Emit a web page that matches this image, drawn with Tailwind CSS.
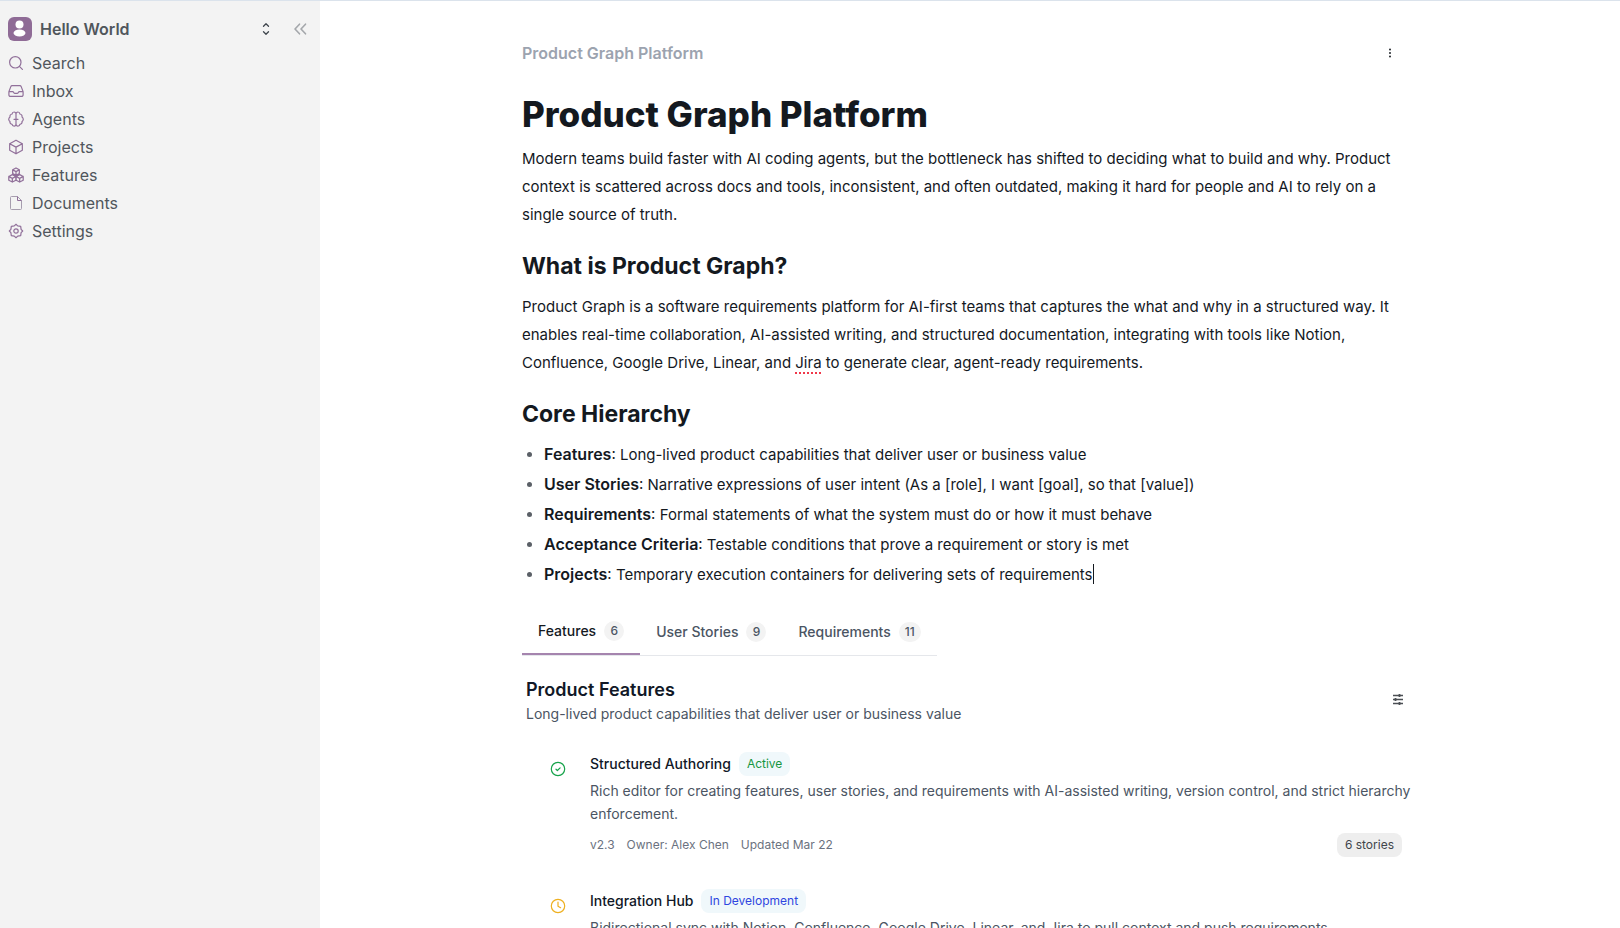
<!DOCTYPE html>
<html lang="en">
<head>
<meta charset="utf-8">
<title>Product Graph Platform</title>
<script src="https://cdn.jsdelivr.net/npm/@tailwindcss/browser@4"></script>
</head>
<body class="flex h-screen overflow-hidden border-t border-[#dbe3ec] bg-white font-['Inter',sans-serif] text-[#14191f]">

<aside class="w-80 shrink-0 bg-[#f3f3f3] px-2 pt-3 text-[#50565c]">
  <div class="flex h-8 items-center">
    <button class="flex grow items-center gap-2 text-left font-semibold">
      <svg class="size-6" viewBox="0 0 24 24"><rect width="24" height="24" rx="6" fill="#8f6b96"/><circle cx="11.5" cy="7.500" r="4" fill="#fff"/><ellipse cx="11.500" cy="16" rx="6" ry="3.500" fill="#fff"/></svg>
      <span class="grow">Hello World</span>
      <svg class="size-4" viewBox="0 0 16 16" fill="none" stroke="#3f464d" stroke-width="1.300" stroke-linecap="round" stroke-linejoin="round"><path d="M5.500 5.300 8 2.800l2.500 2.500M5.500 10.700 8 13.200l2.500-2.500"/></svg>
    </button>
    <button class="ml-4 mr-0.5" aria-label="Collapse sidebar">
      <svg class="w-5 h-4" viewBox="0 0 20 16" fill="none" stroke="#a4a7ab" stroke-width="1.600" stroke-linecap="round" stroke-linejoin="round"><path d="M9.500 3.200 5 8l4.500 4.800M15.500 3.200 11 8l4.500 4.800"/></svg>
    </button>
  </div>
  <nav class="mt-1 flex flex-col">
    <a href="#" class="flex h-7 items-center gap-2"><svg class="size-4" viewBox="0 0 16 16" fill="none" stroke="#91709a" stroke-width="1.200" stroke-linecap="round"><circle cx="7.300" cy="7.300" r="5.700"/><path d="m11.400 11.400 3 3"/></svg>Search</a>
    <a href="#" class="flex h-7 items-center gap-2"><svg class="size-4" viewBox="0 0 16 16" fill="none" stroke="#91709a" stroke-width="1.200" stroke-linecap="round" stroke-linejoin="round"><path d="M4.200 2.600h7.600a1.500 1.500 0 0 1 1.400 1l1.900 5v3.300a1.500 1.500 0 0 1-1.500 1.500H2.400a1.500 1.500 0 0 1-1.500-1.500V8.600l1.900-5a1.500 1.500 0 0 1 1.400-1ZM.9 8.600h3.700c.6 0 .8.300 1.100.9.300.6.700.9 1.300.9h2c.6 0 1-.3 1.300-.9.300-.6.500-.9 1.100-.9h3.700"/></svg>Inbox</a>
    <a href="#" class="flex h-7 items-center gap-2"><svg class="size-4" viewBox="0 0 16 16" fill="none" stroke="#91709a" stroke-width="1.200" stroke-linecap="round" stroke-linejoin="round"><path d="M8 3.200C8 1.800 7.200 1 6.100 1S4.200 1.800 4.100 3C2.500 3.200 1.700 4.500 2 6 .9 6.700.6 7.700.8 8.800c.1.800.5 1.300 1.200 1.700-.3 1.500.6 2.700 2.100 2.800.1 1.100.9 1.900 2 1.900s1.900-.8 1.900-2.100ZM8 3.200C8 1.800 8.800 1 9.900 1s1.900.8 2 2c1.600.2 2.400 1.500 2.100 3 1.100.7 1.400 1.700 1.200 2.800-.1.800-.5 1.300-1.200 1.700.3 1.500-.6 2.700-2.100 2.800-.1 1.100-.9 1.900-2 1.900S8 14.400 8 13.100M6 8.300h4"/></svg>Agents</a>
    <a href="#" class="flex h-7 items-center gap-2"><svg class="size-4" viewBox="0 0 24 24" fill="none" stroke="#91709a" stroke-width="1.800" stroke-linecap="round" stroke-linejoin="round"><path d="M12 1.800 21.500 7v10L12 22.200 2.500 17V7ZM2.500 7l9.500 5.200L21.500 7M12 12.200v10"/></svg>Projects</a>
    <a href="#" class="flex h-7 items-center gap-2"><svg class="size-4" viewBox="0 0 24 24" fill="none" stroke="#91709a" stroke-width="1.900" stroke-linecap="round" stroke-linejoin="round"><path d="m12 1.500 5 2.700v5.600l-5 2.700-5-2.700V4.200ZM7 4.200 12 7l5-2.800M12 7v5.500M6.500 11.500l5.300 2.800v5.500l-5.300 2.700-5.300-2.700v-5.500ZM1.200 14.300l5.300 2.800 5.300-2.800M6.500 17.100v5.400M17.500 11.500l5.300 2.800v5.500l-5.300 2.700-5.300-2.700v-5.500ZM12.200 14.300l5.300 2.800 5.300-2.800M17.500 17.100v5.400"/></svg>Features</a>
    <a href="#" class="flex h-7 items-center gap-2"><svg class="size-4" viewBox="0 0 16 16" fill="none" stroke="#a69dae" stroke-linejoin="round"><path d="M9.500 1.500h-6a1 1 0 0 0-1 1v11a1 1 0 0 0 1 1h9a1 1 0 0 0 1-1v-8Z"/><path d="M9.500 1.500v4h4" stroke="#91709a"/></svg>Documents</a>
    <a href="#" class="flex h-7 items-center gap-2"><svg class="size-4" viewBox="0 0 16 16" fill="none" stroke="#91709a" stroke-width="1.200" stroke-linejoin="round"><path d="M8 1.300 9.700 2.900 12.700 3.300 13.100 6.300 14.700 8 13.100 9.700 12.700 12.700 9.700 13.100 8 14.700 6.300 13.100 3.300 12.700 2.900 9.700 1.300 8 2.900 6.300 3.300 3.300 6.300 2.900Z"/><circle cx="8" cy="8" r="2.200"/></svg>Settings</a>
  </nav>
</aside>

<main class="min-w-0 grow overflow-hidden">
  <div class="mx-auto max-w-4xl pt-10">
    <header class="flex h-6 items-center justify-between pr-5">
      <span class="font-semibold text-[#9ca3af]">Product Graph Platform</span>
      <button aria-label="More options"><svg class="size-4" viewBox="0 0 16 16" fill="#1f2429"><circle cx="8" cy="4.500" r="1"/><circle cx="8" cy="8" r="1"/><circle cx="8" cy="11.500" r="1"/></svg></button>
    </header>

    <article class="text-[15px]">
      <h1 class="mt-7 text-[35px] font-extrabold leading-[42px]">Product Graph Platform</h1>
      <p class="mt-2.5 leading-7">Modern teams build faster with AI coding agents, but the bottleneck has shifted to deciding what to build and why. Product context is scattered across docs and tools, inconsistent, and often outdated, making it hard for people and AI to rely on a single source of truth.</p>
      <h2 class="mt-[21px] text-[23px] font-bold leading-8">What is Product Graph?</h2>
      <p class="mt-[11px] leading-7">Product Graph is a software requirements platform for AI-first teams that captures the what and why in a structured way. It enables real-time collaboration, AI-assisted writing, and structured documentation, integrating with tools like Notion, Confluence, Google Drive, Linear, and <span class="underline decoration-[#f0384a] decoration-dotted decoration-2 underline-offset-4">Jira</span> to generate clear, agent-ready requirements.</p>
      <h2 class="mt-[21px] text-[23px] font-bold leading-8">Core Hierarchy</h2>
      <ul class="mt-2.5 flex list-disc flex-col gap-px pl-[22px] leading-7 marker:text-[#5b6067]">
        <li><strong class="text-base leading-7 font-semibold">Features</strong>: Long-lived product capabilities that deliver user or business value</li>
        <li><strong class="text-base leading-7 font-semibold">User Stories</strong>: Narrative expressions of user intent (As a [role], I want [goal], so that [value])</li>
        <li><strong class="text-base leading-7 font-semibold">Requirements</strong>: Formal statements of what the system must do or how it must behave</li>
        <li><strong class="text-base leading-7 font-semibold">Acceptance Criteria</strong>: Testable conditions that prove a requirement or story is met</li>
        <li><strong class="text-base leading-7 font-semibold">Projects</strong>: Temporary execution containers for delivering sets of requirements<span class="inline-block h-5 w-px bg-[#14191f] align-text-bottom"></span></li>
      </ul>
    </article>

    <div role="tablist" class="mt-5 flex h-[47px] w-fit border-b border-[#e5e7eb] text-sm font-medium text-[#4b5563]">
      <button role="tab" aria-selected="true" class="flex items-center gap-2 border-b-2 border-[#a584ae] px-4 text-[#14191f]">Features <span class="min-w-5 rounded-full bg-[#f3f3f3] px-1.5 text-xs leading-5 text-[#4b5563]">6</span></button>
      <button role="tab" aria-selected="false" class="flex items-center gap-2 px-4">User Stories <span class="min-w-5 rounded-full bg-[#f3f3f3] px-1.5 text-xs leading-5">9</span></button>
      <button role="tab" aria-selected="false" class="flex items-center gap-2 px-4">Requirements <span class="min-w-5 rounded-full bg-[#f3f3f3] px-1.5 text-xs leading-5">11</span></button>
    </div>

    <section class="px-1 pt-5">
      <div class="flex items-center justify-between pr-2">
        <div>
          <h3 class="text-lg font-semibold text-[#111827]">Product Features</h3>
          <p class="text-sm text-[#4b5563]">Long-lived product capabilities that deliver user or business value</p>
        </div>
        <button aria-label="Display settings"><svg class="size-4" viewBox="0 0 16 16" fill="none" stroke="#4b4f54"><path d="M3 3.500h10M3 7.500h10M3 11.500h10" stroke-width="1.400"/><path d="M9.500 2v3M5.500 6v3M9.500 10v3" stroke-width="1.800"/></svg></button>
      </div>

      <div class="mt-7 flex gap-4 pl-6">
        <svg class="mr-1 mt-[9px] size-4 shrink-0" viewBox="0 0 16 16" fill="none" stroke="#16a34a" stroke-width="1.200" stroke-linecap="round" stroke-linejoin="round"><circle cx="8" cy="8" r="6.700"/><path d="m6 8.200 1.400 1.300 2.700-2.700"/></svg>
        <div class="ml-1 grow">
          <div class="flex h-6 items-center gap-2"><h4 class="text-sm font-medium text-[#111827]">Structured Authoring</h4><span class="rounded-lg bg-[#f0f8fb] px-2 text-xs leading-6 text-[#16963f]">Active</span></div>
          <p class="mt-[3px] text-sm leading-[23px] text-[#4b5563]">Rich editor for creating features, user stories, and requirements with AI-assisted writing, version control, and strict hierarchy enforcement.</p>
          <div class="mt-2 flex h-6 items-center gap-3 pr-3 text-xs text-[#6b7280]"><span>v2.3</span><span>Owner: Alex Chen</span><span class="grow">Updated Mar 22</span><span class="rounded-lg bg-[#eeeeee] px-2 leading-6 text-[#3f454b]">6 stories</span></div>
        </div>
      </div>

      <div class="mt-8 flex gap-4 pl-6">
        <svg class="mr-1 mt-[9px] size-4 shrink-0" viewBox="0 0 16 16" fill="none" stroke="#eeb020" stroke-width="1.200" stroke-linecap="round" stroke-linejoin="round"><circle cx="8" cy="8" r="6.700"/><path d="M8 4v4.200l2.600 1.500"/></svg>
        <div class="ml-1 grow">
          <div class="flex h-6 items-center gap-2"><h4 class="text-sm font-medium text-[#111827]">Integration Hub</h4><span class="rounded-lg bg-[#f0f8fb] px-2 text-xs leading-6 text-[#2f46e0]">In Development</span></div>
          <p class="mt-[3px] text-sm leading-[23px] text-[#4b5563]">Bidirectional sync with Notion, Confluence, Google Drive, Linear, and Jira to pull context and push requirements.</p>
        </div>
      </div>
    </section>
  </div>
</main>
</body>
</html>
